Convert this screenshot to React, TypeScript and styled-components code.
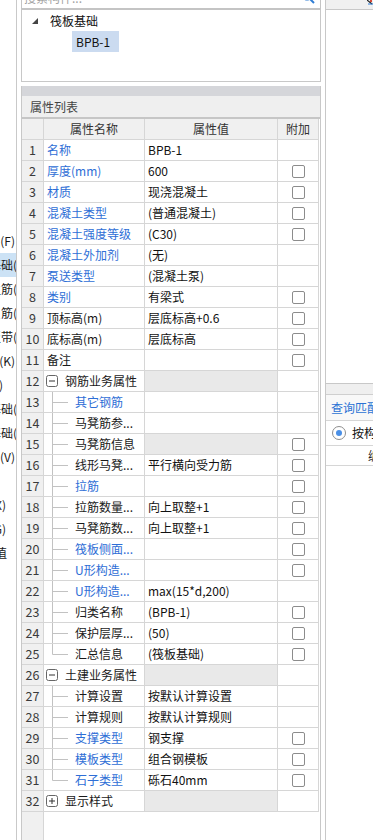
import React from 'react';
import styled, { createGlobalStyle } from 'styled-components';

const GlobalStyle = createGlobalStyle`
  html, body { margin: 0; padding: 0; background: #ffffff; overflow: hidden; }
  body {
    font-family: "Noto Sans CJK SC", "Microsoft YaHei", sans-serif;
    font-size: 12px;
    color: #1a1a1a;
  }
  * { box-sizing: border-box; }
`;

const Page = styled.div`
  display: flex;
  width: 373px;
  height: 840px;
  overflow: hidden;
  background: #fff;
`;

/* ---------- left clipped tree strip ---------- */
const LeftStrip = styled.div`
  width: 17px;
  flex-shrink: 0;
  border-right: 1px solid #c9c9c9;
  padding-top: 229px;
  overflow: hidden;
`;

const LeftItem = styled.div<{ $active?: boolean }>`
  height: 24px;
  width: 16px;
  display: flex;
  align-items: center;
  justify-content: flex-end;
  white-space: nowrap;
  overflow: hidden;
  line-height: 1;
  color: #1a1a1a;
  background: ${(p) => (p.$active ? '#cce2f5' : 'transparent')};
`;

const LeftText = styled.span<{ $end: number }>`
  flex-shrink: 0;
  margin-right: ${(p) => 16 - p.$end}px;
`;

/* ---------- main column ---------- */
const MainColumn = styled.div`
  width: 300px;
  flex-shrink: 0;
  margin-left: 4px;
  margin-top: -14px;
  height: 854px;
  display: flex;
  flex-direction: column;
`;

const SearchBox = styled.div`
  height: 23px;
  border: 1px solid #c4c4c4;
  display: flex;
  align-items: center;
  padding: 0 5px 0 2px;
  color: #a2a2a2;
  background: #fff;
`;

const SearchIcon = styled.svg`
  margin-left: auto;
  flex-shrink: 0;
`;

const TreeBox = styled.div`
  height: 73px;
  border: 1px solid #c8c8c8;
  border-top-color: #c4c4c4;
  background: #fff;
  display: flex;
  flex-direction: column;
`;

const TreeRow = styled.div<{ $indent: number }>`
  height: 21px;
  display: flex;
  align-items: center;
  padding-left: ${(p) => p.$indent}px;
  line-height: 1;
`;

const TreeLabel = styled.span`
  margin-left: 12px;
  color: #111;
`;

const TreeSelected = styled.span`
  width: 47px;
  height: 21px;
  display: flex;
  align-items: center;
  padding-left: 4px;
  background: #cbdbf0;
  color: #111;
`;

const PropPanel = styled.div`
  margin-top: 4px;
  flex: 1;
  min-height: 0;
  display: flex;
  flex-direction: column;
  border-left: 1px solid #c8c8c8;
  border-right: 1px solid #c8c8c8;
`;

const Band = styled.div`
  height: 10px;
  flex-shrink: 0;
  background: #d5d6da;
`;

const TitleBar = styled.div`
  height: 23px;
  flex-shrink: 0;
  background: #efefef;
  border-bottom: 2px solid #c6c6c6;
  display: flex;
  align-items: center;
  padding-left: 8px;
  color: #444;
  line-height: 1;
`;

const GridRow = styled.div`
  display: grid;
  grid-template-columns: 22px 101px 133px 41px;
  height: 21px;
  flex-shrink: 0;
`;

const Cell = styled.div`
  border-right: 1px solid #d6d6d6;
  border-bottom: 1px solid #d6d6d6;
  display: flex;
  align-items: center;
  overflow: hidden;
  white-space: nowrap;
  line-height: 1;
`;

const HeadCell = styled(Cell)`
  justify-content: center;
  background: #f0f0f0;
  color: #333;
`;

const IndexCell = styled(Cell)`
  justify-content: center;
  background: #f0f0f0;
  color: #3a3a3a;
  font-size: 12.5px;
`;

const NameCell = styled(Cell)<{ $blue?: boolean; $pad: number }>`
  padding-left: ${(p) => p.$pad}px;
  color: ${(p) => (p.$blue ? '#2e6ed6' : '#1a1a1a')};
  background: #fff;
`;

const ValueCell = styled(Cell)<{ $grey?: boolean }>`
  padding-left: 3px;
  color: #111;
  background: ${(p) => (p.$grey ? '#e9e9e9' : '#fff')};
`;

const ExtraCell = styled(Cell)`
  justify-content: center;
  background: #fff;
`;

const CheckBox = styled.span`
  width: 13px;
  height: 13px;
  border: 1px solid #8c8c8c;
  border-radius: 2px;
  background: #fff;
`;

const Connector = styled.svg`
  flex-shrink: 0;
  margin-right: 7px;
  margin-left: -3px;
`;

const ExpandIcon = styled.svg`
  flex-shrink: 0;
  margin-right: 7px;
`;

const Filler = styled.div`
  flex: 1;
  display: grid;
  grid-template-columns: 22px 1fr;
`;

const FillerIndex = styled.div`
  background: #f0f0f0;
  border-right: 1px solid #d6d6d6;
`;

/* ---------- right panel ---------- */
const RightPanel = styled.div`
  width: 48px;
  flex-shrink: 0;
  margin-left: 4px;
  border-left: 1px solid #c8c8c8;
  display: flex;
  flex-direction: column;
  overflow: hidden;
`;

const RightTop = styled.div`
  height: 10px;
  flex-shrink: 0;
  background: #f0f0f0;
  border-bottom: 1px solid #c8c8c8;
  display: flex;
  justify-content: flex-end;
  align-items: flex-start;
`;

const RightList = styled.div`
  height: 374px;
  flex-shrink: 0;
  background: #fff;
  border-bottom: 1px solid #c8c8c8;
`;

const RightBand = styled.div`
  height: 11px;
  flex-shrink: 0;
  background: #efefef;
  border-bottom: 1px solid #cfcfcf;
`;

const QueryTitle = styled.div`
  height: 26px;
  flex-shrink: 0;
  border-bottom: 1px solid #d6d6d6;
  background: #f8f8f8;
  display: flex;
  align-items: center;
  padding-left: 5px;
  white-space: nowrap;
  overflow: hidden;
  color: #2b72d4;
  line-height: 1;
`;

const RadioRow = styled.div`
  height: 25px;
  flex-shrink: 0;
  border-bottom: 1px solid #d6d6d6;
  display: flex;
  align-items: center;
  padding-left: 6px;
  white-space: nowrap;
  overflow: hidden;
  line-height: 1;
  color: #111;
`;

const Radio = styled.span`
  width: 14px;
  height: 14px;
  flex-shrink: 0;
  border: 1px solid #8e8e8e;
  border-radius: 50%;
  background: #fff;
  display: flex;
  align-items: center;
  justify-content: center;
  margin-right: 6px;
  &::after {
    content: '';
    width: 6px;
    height: 6px;
    border-radius: 50%;
    background: #4a8fe6;
  }
`;

const ColHeader = styled.div`
  height: 20px;
  flex-shrink: 0;
  border-bottom: 1px solid #d6d6d6;
  display: flex;
  align-items: center;
  padding-left: 42px;
  white-space: nowrap;
  overflow: hidden;
  line-height: 1;
  color: #222;
`;

type Row = {
  n: number;
  name: string;
  value?: string;
  blue?: boolean;
  check?: boolean;
  kind?: 'group' | 'child';
  open?: boolean;
  last?: boolean;
  grey?: boolean;
};

const rows: Row[] = [
  { n: 1, name: '名称', value: 'BPB-1', blue: true },
  { n: 2, name: '厚度(mm)', value: '600', blue: true, check: true },
  { n: 3, name: '材质', value: '现浇混凝土', blue: true, check: true },
  { n: 4, name: '混凝土类型', value: '(普通混凝土)', blue: true, check: true },
  { n: 5, name: '混凝土强度等级', value: '(C30)', blue: true, check: true },
  { n: 6, name: '混凝土外加剂', value: '(无)', blue: true },
  { n: 7, name: '泵送类型', value: '(混凝土泵)', blue: true },
  { n: 8, name: '类别', value: '有梁式', blue: true, check: true },
  { n: 9, name: '顶标高(m)', value: '层底标高+0.6', check: true },
  { n: 10, name: '底标高(m)', value: '层底标高', check: true },
  { n: 11, name: '备注', value: '', check: true },
  { n: 12, name: '钢筋业务属性', kind: 'group', open: true, grey: true },
  { n: 13, name: '其它钢筋', kind: 'child', blue: true },
  { n: 14, name: '马凳筋参...', kind: 'child' },
  { n: 15, name: '马凳筋信息', kind: 'child', grey: true, check: true },
  { n: 16, name: '线形马凳...', value: '平行横向受力筋', kind: 'child', check: true },
  { n: 17, name: '拉筋', kind: 'child', blue: true, check: true },
  { n: 18, name: '拉筋数量...', value: '向上取整+1', kind: 'child', check: true },
  { n: 19, name: '马凳筋数...', value: '向上取整+1', kind: 'child', check: true },
  { n: 20, name: '筏板侧面...', kind: 'child', blue: true, check: true },
  { n: 21, name: 'U形构造...', kind: 'child', blue: true, check: true },
  { n: 22, name: 'U形构造...', value: 'max(15*d,200)', kind: 'child', blue: true },
  { n: 23, name: '归类名称', value: '(BPB-1)', kind: 'child', check: true },
  { n: 24, name: '保护层厚...', value: '(50)', kind: 'child', check: true },
  { n: 25, name: '汇总信息', value: '(筏板基础)', kind: 'child', check: true, last: true },
  { n: 26, name: '土建业务属性', kind: 'group', open: true, grey: true },
  { n: 27, name: '计算设置', value: '按默认计算设置', kind: 'child' },
  { n: 28, name: '计算规则', value: '按默认计算规则', kind: 'child' },
  { n: 29, name: '支撑类型', value: '钢支撑', kind: 'child', blue: true, check: true },
  { n: 30, name: '模板类型', value: '组合钢模板', kind: 'child', blue: true, check: true },
  { n: 31, name: '石子类型', value: '砾石40mm', kind: 'child', blue: true, check: true, last: true },
  { n: 32, name: '显示样式', kind: 'group', open: false, grey: true },
];

const leftItems: { label: string; end: number; active?: boolean }[] = [
  { label: '基础梁(F)', end: 15 },
  { label: '筏板基础(', end: 17, active: true },
  { label: '筏板主筋(', end: 17 },
  { label: '筏板负筋(', end: 17 },
  { label: '基础板带(', end: 17 },
  { label: '集水坑(K)', end: 15 },
  { label: '柱墩(Y)', end: 3 },
  { label: '独立基础(', end: 17 },
  { label: '条形基础(', end: 17 },
  { label: '桩承台(V)', end: 15 },
  { label: '', end: 0 },
  { label: '垫层(X)', end: 6 },
  { label: '地沟(G)', end: 6 },
  { label: '土方值', end: 7 },
];

const Expand = ({ open }: { open: boolean }) => (
  <ExpandIcon width="12" height="12" viewBox="0 0 12 12">
    <rect x="0.5" y="0.5" width="11" height="11" rx="2" fill="#fff" stroke="#666" />
    <line x1="3" y1="6" x2="9" y2="6" stroke="#333" strokeWidth="1" />
    {!open && <line x1="6" y1="3" x2="6" y2="9" stroke="#333" strokeWidth="1" />}
  </ExpandIcon>
);

const Guide = ({ last }: { last?: boolean }) => (
  <Connector width="27" height="20" viewBox="0 0 27 20">
    <line x1="11.5" y1="0" x2="11.5" y2={last ? 10.5 : 20} stroke="#c2c2c2" strokeWidth="1" />
    <line x1="11.5" y1="10.5" x2="27" y2="10.5" stroke="#c2c2c2" strokeWidth="1" />
  </Connector>
);

export default function App() {
  return (
    <>
      <GlobalStyle />
      <Page>
        <LeftStrip>
          {leftItems.map((it, i) => (
            <LeftItem key={i} $active={it.active}>
              {it.label && <LeftText $end={it.end}>{it.label}</LeftText>}
            </LeftItem>
          ))}
        </LeftStrip>

        <MainColumn>
          <SearchBox>
            <span>搜索构件...</span>
            <SearchIcon width="13" height="13" viewBox="0 0 13 13">
              <circle cx="5" cy="5" r="3.8" fill="none" stroke="#2f7dd4" strokeWidth="1.6" />
              <line x1="7.8" y1="7.8" x2="12" y2="12" stroke="#2f7dd4" strokeWidth="2" />
            </SearchIcon>
          </SearchBox>
          <TreeBox>
            <TreeRow $indent={10}>
              <svg width="6" height="6" viewBox="0 0 6 6">
                <polygon points="6,0 6,6 0,6" fill="#454545" />
              </svg>
              <TreeLabel>筏板基础</TreeLabel>
            </TreeRow>
            <TreeRow $indent={50}>
              <TreeSelected>BPB-1</TreeSelected>
            </TreeRow>
          </TreeBox>

          <PropPanel>
            <Band />
            <TitleBar>属性列表</TitleBar>
            <GridRow>
              <HeadCell />
              <HeadCell>属性名称</HeadCell>
              <HeadCell>属性值</HeadCell>
              <HeadCell>附加</HeadCell>
            </GridRow>
            {rows.map((r) => (
              <GridRow key={r.n}>
                <IndexCell>{r.n}</IndexCell>
                <NameCell $blue={r.blue} $pad={r.kind === 'group' ? 2 : r.kind === 'child' ? 0 : 3}>
                  {r.kind === 'group' && <Expand open={!!r.open} />}
                  {r.kind === 'child' && <Guide last={r.last} />}
                  {r.name}
                </NameCell>
                <ValueCell $grey={r.grey}>{r.value}</ValueCell>
                <ExtraCell>{r.check && <CheckBox />}</ExtraCell>
              </GridRow>
            ))}
            <Filler>
              <FillerIndex />
              <div />
            </Filler>
          </PropPanel>
        </MainColumn>

        <RightPanel>
          <RightTop>
            <svg width="6" height="6" viewBox="0 0 6 6">
              <line x1="0" y1="0" x2="5" y2="4" stroke="#222" strokeWidth="1.2" />
              <line x1="1" y1="4" x2="6" y2="4" stroke="#2a7bd6" strokeWidth="1" />
              <rect x="3" y="0" width="2" height="2" fill="#d64a3a" />
            </svg>
          </RightTop>
          <RightList />
          <RightBand />
          <QueryTitle>查询匹配构件</QueryTitle>
          <RadioRow>
            <Radio />
            按构件类型
          </RadioRow>
          <ColHeader>编号名称</ColHeader>
        </RightPanel>
      </Page>
    </>
  );
}
